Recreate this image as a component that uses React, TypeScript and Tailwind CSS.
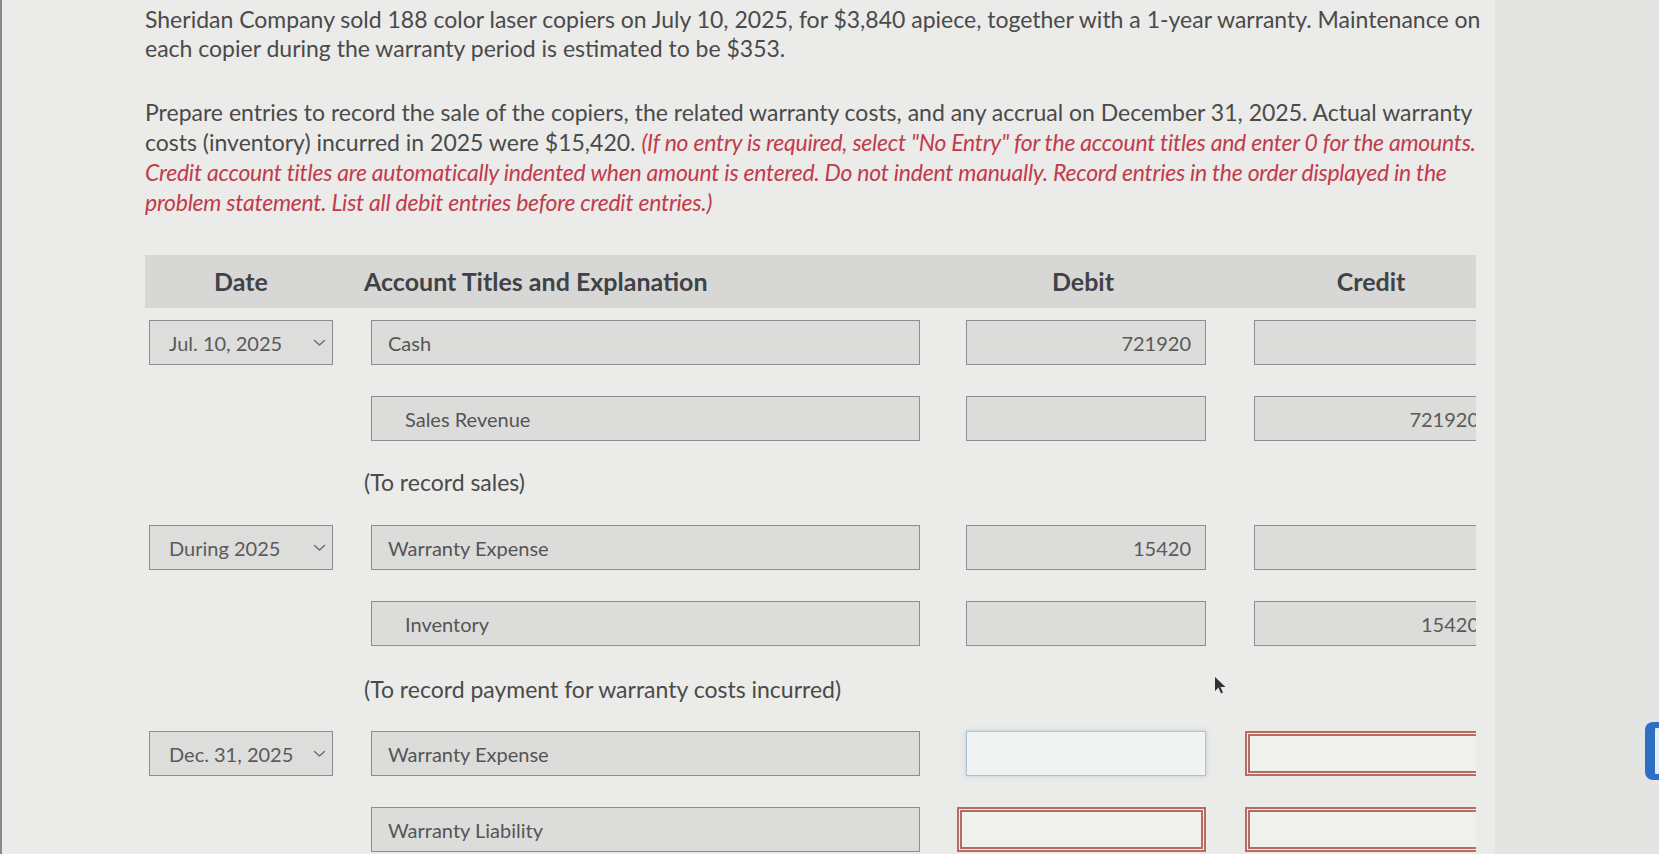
import React from "react";

const font = { fontFamily: "Lato, 'Open Sans', sans-serif" };

function Chevron() {
  return (
    <svg width="13" height="8" viewBox="0 0 13 8" fill="none">
      <path d="M1.5 1.5l5 4.5 5-4.5" stroke="#6b6b6b" strokeWidth="1.4" strokeLinecap="round" strokeLinejoin="round" />
    </svg>
  );
}

function DateSelect({ label }: { label: string }) {
  return (
    <div className="w-[184px] h-[45px] ml-[4px] mr-[38px] shrink-0 flex items-center justify-between pl-[19px] pr-[6px] border-[1.5px] border-[#8d8d8d] bg-[#dddddc] text-[20px] text-[#5a5a5a]">
      <span>{label}</span>
      <Chevron />
    </div>
  );
}

function Account({ label, indent }: { label: string; indent?: boolean }) {
  return (
    <div
      className={
        "w-[549px] h-[45px] shrink-0 flex items-center border-[1.5px] border-[#8d8d8d] bg-[#dcdcdb] text-[20px] text-[#555] " +
        (indent ? "pl-[33px]" : "pl-[16px]")
      }
    >
      {label}
    </div>
  );
}

function Amount({ value, kind }: { value?: string; kind?: "gray" | "blue" | "red" }) {
  const k = kind ?? "gray";
  if (k === "red") {
    return (
      <div className="w-[249px] h-[45px] shrink-0 -ml-[9px] border-[5px] border-double border-[#b86b60] bg-[#f0f0ee]" />
    );
  }
  if (k === "blue") {
    return (
      <div className="w-[240px] h-[45px] shrink-0 border-[1.5px] border-[#a9c2d4] bg-[#f1f2f2] shadow-[0_0_4px_rgba(120,170,210,0.5)]" />
    );
  }
  return (
    <div className="w-[240px] h-[45px] shrink-0 flex items-center justify-end pr-[14px] border-[1.5px] border-[#8d8d8d] bg-[#dcdcdb] text-[20px] text-[#5a5a5a] whitespace-nowrap">
      {value}
    </div>
  );
}

function Row({
  date,
  account,
  indent,
  debit,
  credit,
  debitKind,
  creditKind,
  className,
}: {
  date?: string;
  account: string;
  indent?: boolean;
  debit?: string;
  credit?: string;
  debitKind?: "gray" | "blue" | "red";
  creditKind?: "gray" | "blue" | "red";
  className?: string;
}) {
  return (
    <div className={"flex items-center " + (className ?? "")}>
      {date ? <DateSelect label={date} /> : <div className="w-[226px] shrink-0" />}
      <Account label={account} indent={indent} />
      <div className="w-[46px] shrink-0" />
      <Amount value={debit} kind={debitKind} />
      <div className="w-[48px] shrink-0" />
      <Amount value={credit} kind={creditKind} />
    </div>
  );
}

export default function App() {
  return (
    <div
      className="w-[1659px] h-[854px] overflow-hidden flex bg-[#ebebe9] border-l-[2px] border-[#8a8a8a]"
      style={font}
    >
      <div className="w-[1493px] shrink-0 relative">
        <div className="pl-[143px] pt-[5px] text-[23px] text-[#4a4a4a]">
          <p className="leading-[29px] whitespace-nowrap">
            Sheridan Company sold 188 color laser copiers on July 10, 2025, for $3,840 apiece, together with a 1-year warranty. Maintenance on
            <br />
            each copier during the warranty period is estimated to be $353.
          </p>
          <p className="leading-[30px] mt-[34px] whitespace-nowrap">
            Prepare entries to record the sale of the copiers, the related warranty costs, and any accrual on December 31, 2025. Actual warranty
            <br />
            costs (inventory) incurred in 2025 were $15,420.{" "}
            <span className="italic text-[#c23b4c] tracking-[-0.25px]">
              (If no entry is required, select "No Entry" for the account titles and enter 0 for the amounts.
              <br />
              Credit account titles are automatically indented when amount is entered. Do not indent manually. Record entries in the order displayed in the
              <br />
              problem statement. List all debit entries before credit entries.)
            </span>
          </p>

          <div className="mt-[38px] w-[1331px] overflow-hidden">
            <div className="h-[53px] bg-[#d7d7d6] flex items-center font-bold text-[25px] text-[#3f4246] whitespace-nowrap">
              <div className="w-[192px] shrink-0 text-center">Date</div>
              <div className="ml-[27px] w-[599px] shrink-0">Account Titles and Explanation</div>
              <div className="w-[240px] shrink-0 text-center">Debit</div>
              <div className="ml-[68px] w-[200px] shrink-0 text-center">Credit</div>
            </div>

            <Row className="mt-[12px]" date="Jul. 10, 2025" account="Cash" debit="721920" />
            <Row className="mt-[31px]" account="Sales Revenue" indent credit="721920" />
            <div className="mt-[26px] pl-[219px] leading-[30px]">(To record sales)</div>

            <Row className="mt-[28px]" date="During 2025" account="Warranty Expense" debit="15420" />
            <Row className="mt-[31px]" account="Inventory" indent credit="15420" />
            <div className="mt-[28px] pl-[219px] leading-[30px]">(To record payment for warranty costs incurred)</div>

            <Row className="mt-[27px]" date="Dec. 31, 2025" account="Warranty Expense" debitKind="blue" creditKind="red" />
            <Row className="mt-[31px]" account="Warranty Liability" debitKind="red" creditKind="red" />
          </div>
        </div>

        <svg className="absolute left-[1212px] top-[676px]" width="14" height="20" viewBox="0 0 14 20">
          <path d="M1 1 L1 15 L4.5 11.5 L7 17.5 L9 16.5 L6.5 11 L11.5 11 Z" fill="#333" />
        </svg>
      </div>

      <div className="flex-1 bg-[#e4e4e2] flex flex-col">
        <div className="mt-[722px] ml-[150px] w-[30px] h-[58px] rounded-[8px] bg-[#2d6fc4] p-[6px]">
          <div className="w-[4px] h-full bg-[#e8eef6] ml-[4px] rounded-[1px]" />
        </div>
      </div>
    </div>
  );
}
